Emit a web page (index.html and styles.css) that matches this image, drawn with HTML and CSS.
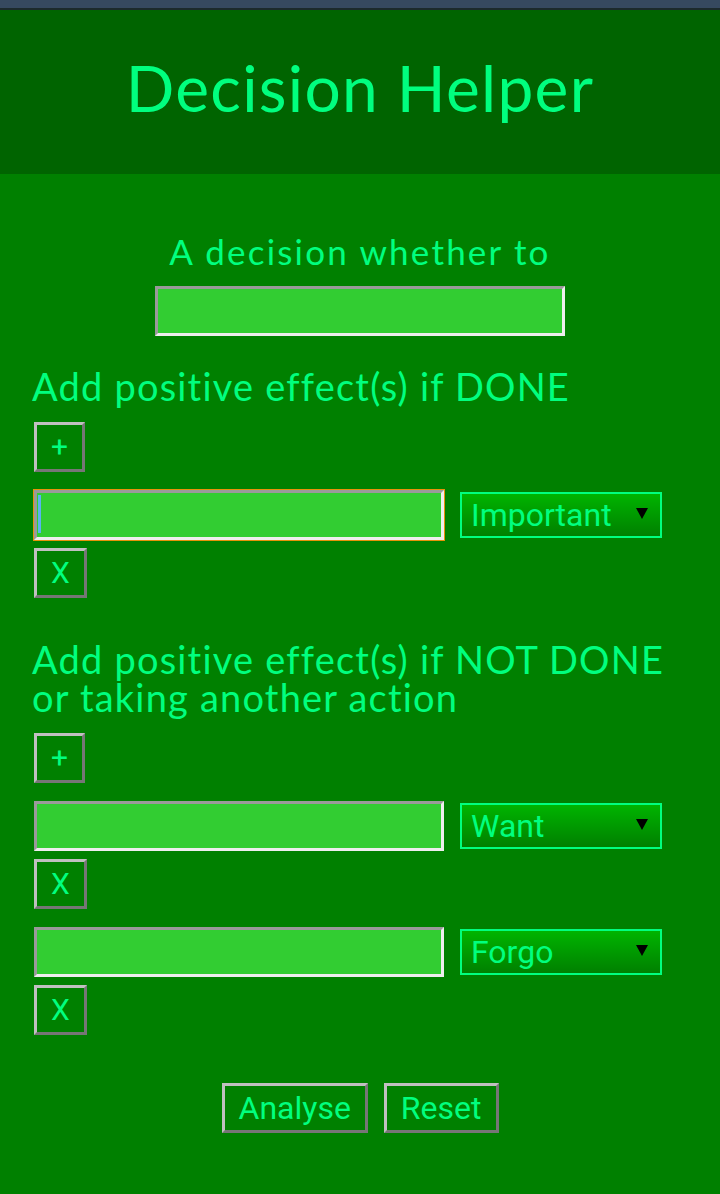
FILE: index.html
```html
<!DOCTYPE html>
<html lang="en">
<head>
<meta charset="utf-8">
<title>Decision Helper</title>
<link rel="stylesheet" href="styles.css">
</head>
<body>
<div class="topbar"></div>
<header class="header">
  <h1 class="title">Decision Helper</h1>
</header>
<main class="main">
  <section class="decision">
    <p class="decision-label">A decision whether to</p>
    <input class="field decision-field" type="text">
  </section>

  <section class="group">
    <h2 class="group-title">Add positive effect(s) if DONE</h2>
    <button class="btn add-btn">+</button>
    <div class="list">
      <div class="effect">
        <div class="effect-row">
          <input class="field effect-field focused" type="text">
          <span class="select-wrap"><select class="select"><option>Important</option></select></span>
        </div>
        <button class="btn">X</button>
      </div>
    </div>
  </section>

  <section class="group">
    <h2 class="group-title">Add positive effect(s) if NOT DONE or taking another action</h2>
    <button class="btn add-btn">+</button>
    <div class="list">
      <div class="effect">
        <div class="effect-row">
          <input class="field effect-field" type="text">
          <span class="select-wrap"><select class="select"><option>Want</option></select></span>
        </div>
        <button class="btn">X</button>
      </div>
      <div class="effect">
        <div class="effect-row">
          <input class="field effect-field" type="text">
          <span class="select-wrap"><select class="select"><option>Forgo</option></select></span>
        </div>
        <button class="btn">X</button>
      </div>
    </div>
  </section>

  <div class="actions">
    <button class="btn">Analyse</button>
    <button class="btn">Reset</button>
  </div>
</main>
</body>
</html>
```

FILE: styles.css
```css
html, body {
  margin: 0;
  padding: 0;
}
body {
  background: #008000;
  color: #00ff7f;
  font-family: Lato, "Open Sans", sans-serif;
  min-height: 1194px;
}
.topbar {
  height: 8px;
  background: #36495f;
  border-bottom: 2px solid #1c2a2c;
}
.header {
  background: #006400;
  height: 164px;
  box-sizing: border-box;
  padding-top: 40px;
  text-align: center;
}
.title {
  margin: 0;
  font-size: 64px;
  line-height: 76px;
  font-weight: 400;
  letter-spacing: 1.3px;
}
.main {
  padding: 57px 20px 62px 34px;
}
.decision {
  text-align: center;
  margin-right: 14px;
}
.decision-label {
  margin: 0;
  font-size: 35px;
  line-height: 40px;
  letter-spacing: 2.2px;
}
.field {
  box-sizing: border-box;
  width: 410px;
  height: 50px;
  border: 3px solid;
  border-color: #9a9a9a #eeeeee #eeeeee #9a9a9a;
  background: #32cd32;
  margin: 0;
  padding: 0 4px;
  font-family: Roboto, sans-serif;
  font-size: 28px;
  color: #000;
  outline: none;
}
.decision-field {
  display: block;
  margin: 15px auto 0;
}
.group {
  margin-top: 31px;
  display: flex;
  flex-direction: column;
  align-items: flex-start;
}
.group + .group {
  margin-top: 42px;
}
.group-title {
  margin: 0 0 17px -2px;
  font-size: 38px;
  line-height: 38px;
  font-weight: 400;
  letter-spacing: 1.2px;
}
.btn {
  box-sizing: border-box;
  height: 50px;
  padding: 0 14px;
  margin: 0;
  border: 3px solid;
  border-color: #c0c0c0 #767676 #767676 #c0c0c0;
  background: transparent;
  color: #00ff7f;
  font-family: Roboto, sans-serif;
  font-size: 30px;
  line-height: 44px;
}
.add-btn {
  margin-bottom: 18px;
}
.list {
  display: flex;
  flex-direction: column;
  gap: 18px;
}
.effect {
  display: flex;
  flex-direction: column;
  align-items: flex-start;
  gap: 8px;
}
.effect-row {
  display: flex;
  align-items: center;
  gap: 16px;
}
.focused {
  outline: 1px solid #e8920a;
  background: linear-gradient(#5ab4f0, #5ab4f0) no-repeat 1px 2px / 3px 38px, #32cd32;
}
.select-wrap {
  position: relative;
  display: block;
}
.select-wrap::after {
  content: "";
  position: absolute;
  right: 14px;
  top: 16px;
  width: 0;
  height: 0;
  border-left: 6px solid transparent;
  border-right: 6px solid transparent;
  border-top: 11px solid #000;
  pointer-events: none;
}
.select {
  -webkit-appearance: none;
  appearance: none;
  box-sizing: border-box;
  display: block;
  width: 202px;
  height: 46px;
  margin: 0;
  padding: 0 9px;
  border: 2px solid #00ff7f;
  border-radius: 0;
  background: linear-gradient(#00b400, #008000);
  color: #00ff7f;
  font-family: Roboto, sans-serif;
  font-size: 32px;
  outline: none;
}
.actions {
  margin-top: 48px;
  margin-right: 14px;
  display: flex;
  justify-content: center;
  gap: 16px;
}
.actions .btn {
  font-size: 32px;
  padding: 0 14px;
}
```
